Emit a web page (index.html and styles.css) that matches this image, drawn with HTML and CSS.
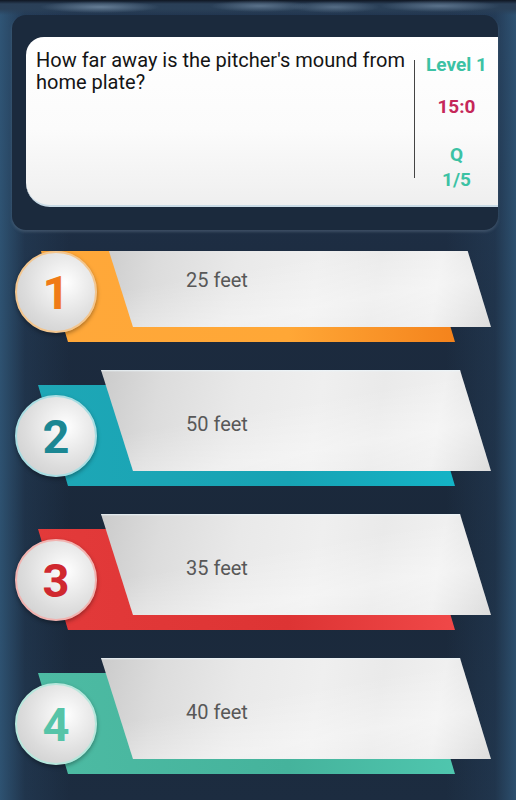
FILE: index.html
```html
<!DOCTYPE html>
<html>
<head>
<meta charset="utf-8">
<link rel="stylesheet" href="styles.css">
</head>
<body>
<div class="screen">
  <div class="topglow"></div>
  <div class="panel">
    <div class="qcard">
      <div class="question">How far away is the pitcher's mound from home plate?</div>
      <div class="sep"></div>
      <div class="side">
        <div class="level">Level 1</div>
        <div class="timer">15:0</div>
        <div class="qlabel">Q</div>
        <div class="qcount">1/5</div>
      </div>
    </div>
  </div>
  <div class="answers">
    <div class="item item-1">
      <div class="strip"></div>
      <div class="card"><span class="atext">25 feet</span></div>
      <div class="badge"><span>1</span></div>
    </div>
    <div class="item item-2">
      <div class="strip"></div>
      <div class="card"><span class="atext">50 feet</span></div>
      <div class="badge"><span>2</span></div>
    </div>
    <div class="item item-3">
      <div class="strip"></div>
      <div class="card"><span class="atext">35 feet</span></div>
      <div class="badge"><span>3</span></div>
    </div>
    <div class="item item-4">
      <div class="strip"></div>
      <div class="card"><span class="atext">40 feet</span></div>
      <div class="badge"><span>4</span></div>
    </div>
  </div>
</div>
</body>
</html>
```
FILE: styles.css
```css
html, body {
  margin: 0;
  padding: 0;
}
body {
  width: 516px;
  height: 800px;
  overflow: hidden;
  font-family: Roboto, "Liberation Sans", sans-serif;
  background:
    linear-gradient(to right, rgba(52, 95, 130, 0.75) 0px, rgba(40, 70, 100, 0.35) 25px, rgba(27, 42, 62, 0) 70px, rgba(27, 42, 62, 0) 446px, rgba(40, 70, 100, 0.35) 495px, rgba(52, 95, 130, 0.7) 516px),
    linear-gradient(to bottom, #223650 0px, #1c2b3f 300px, #1a283a 560px, #1c2c40 800px);
}
.screen {
  position: relative;
  height: 800px;
}
.topglow {
  height: 15px;
  background:
    radial-gradient(ellipse 60px 6px at 100px 7px, rgba(150, 175, 200, 0.55), rgba(150, 175, 200, 0) 100%),
    radial-gradient(ellipse 50px 6px at 260px 6px, rgba(150, 175, 200, 0.45), rgba(150, 175, 200, 0) 100%),
    radial-gradient(ellipse 45px 6px at 335px 7px, rgba(150, 175, 200, 0.4), rgba(150, 175, 200, 0) 100%),
    radial-gradient(ellipse 60px 6px at 440px 6px, rgba(150, 175, 200, 0.45), rgba(150, 175, 200, 0) 100%),
    linear-gradient(to bottom, #0f1622 0px, #2a3f57 4px, #2a4058 9px, rgba(34, 54, 80, 0) 15px);
}
.panel {
  margin: 0 18px 0 12px;
  height: 215px;
  box-sizing: border-box;
  padding: 22px 0 0 14px;
  background: #1b2a3d;
  border-radius: 14px;
  box-shadow: 0 2px 3px rgba(120, 140, 160, 0.35);
}
.qcard {
  display: flex;
  height: 170px;
  background: linear-gradient(to bottom, #ffffff 0%, #fbfbfb 55%, #efefef 100%);
  border-radius: 18px 0 0 24px;
  border-bottom: 2px solid #c9dbe6;
  box-sizing: border-box;
}
.question {
  flex: 1;
  padding: 12px 0 0 10px;
  font-size: 20px;
  line-height: 22px;
  color: #141414;
}
.sep {
  width: 1.5px;
  margin-top: 23px;
  height: 118px;
  background: #444;
}
.side {
  width: 83px;
  display: flex;
  flex-direction: column;
  align-items: center;
  font-weight: 700;
  font-size: 19px;
  line-height: 22px;
  padding-top: 17px;
}
.level {
  color: #3cc2a4;
}
.timer {
  color: #c52759;
  margin-top: 20px;
}
.qlabel {
  color: #3cc2a4;
  margin-top: 26px;
}
.qcount {
  color: #3cc2a4;
  margin-top: 3px;
}

.answers {
  margin-top: 21px;
  height: 549px;
  overflow: hidden;
}
.item {
  display: grid;
  height: 144px;
}
.item-1 {
  margin-top: -25px;
}
.item > * {
  grid-area: 1 / 1;
}
.strip {
  margin: 15px 0 0 38px;
  width: 417px;
  height: 101px;
  clip-path: polygon(0 0, 387px 0, 417px 101px, 30px 101px);
}
.item-1 .strip { background: linear-gradient(to right, #ffa83a 0%, #ffa736 60%, #f4831c 100%); }
.item-2 .strip { background: linear-gradient(to right, #1ea7b6 0%, #17a3b4 60%, #14b3c6 100%); }
.item-3 .strip { background: linear-gradient(to right, #e33a3a 0%, #dd3434 60%, #f04848 100%); }
.item-4 .strip { background: linear-gradient(to right, #4dbba3 0%, #45b39c 60%, #4fc6ae 100%); }

.card {
  margin-left: 101px;
  width: 390px;
  height: 101px;
  box-sizing: border-box;
  padding: 42px 0 0 85px;
  clip-path: polygon(0 0, 359px 0, 390px 101px, 32px 101px);
  background:
    linear-gradient(to bottom, rgba(235, 245, 250, 0.9) 0px, rgba(235, 245, 250, 0) 2px),
    linear-gradient(170deg, rgba(255, 255, 255, 0) 40%, rgba(255, 255, 255, 0.35) 70%, rgba(255, 255, 255, 0) 100%),
    linear-gradient(100deg, #cbcbcb 0%, #dcdcdc 15%, #e9e9e9 35%, #efefef 55%, #eaeaea 70%, #f0f0f0 85%, #dcdcdc 100%);
}
.atext {
  font-size: 20px;
  color: #585858;
}
.badge {
  position: relative;
  z-index: 1;
  margin: 25px 0 0 15px;
  width: 82px;
  height: 82px;
  box-sizing: border-box;
  border-radius: 50%;
  align-self: start;
  justify-self: start;
  display: flex;
  align-items: center;
  justify-content: center;
  background: radial-gradient(circle at 62% 38%, #ffffff 0%, #f0f0f0 25%, #dcdcdc 60%, #c9c9c9 100%);
  box-shadow: 0 2px 4px rgba(0, 0, 0, 0.35);
  font-weight: 700;
  font-size: 47px;
  line-height: 1;
}
.item-1 .badge { border: 2px solid #f3c68f; color: #f07b16; }
.item-2 .badge { border: 2px solid #a9dde2; color: #1b8793; }
.item-3 .badge { border: 2px solid #f1b3b0; color: #d0282f; }
.item-4 .badge { border: 2px solid #b7e7dc; color: #56c4a8; }
```
